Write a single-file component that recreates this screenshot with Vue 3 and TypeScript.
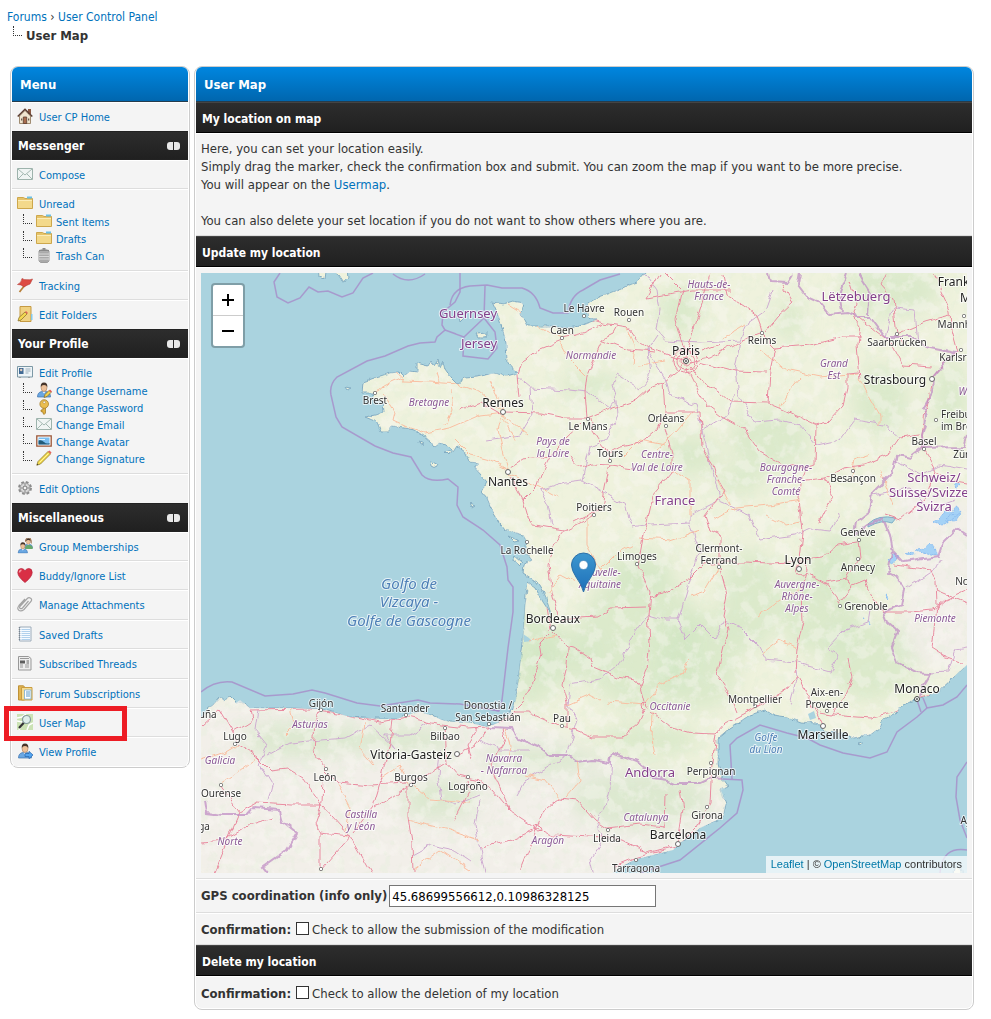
<script setup lang="ts">
import { ref } from 'vue'

interface SubItem { label: string; icon: string }
interface MenuItem { label: string; icon: string; children?: SubItem[]; tall?: boolean; marked?: boolean }
interface MenuSection { title?: string; items: MenuItem[] }

const sections: MenuSection[] = [
  { items: [{ label: 'User CP Home', icon: 'home' }] },
  {
    title: 'Messenger',
    items: [
      { label: 'Compose', icon: 'mail' },
      {
        label: 'Unread',
        icon: 'folder',
        children: [
          { label: 'Sent Items', icon: 'folder' },
          { label: 'Drafts', icon: 'folder' },
          { label: 'Trash Can', icon: 'trash' },
        ],
      },
      { label: 'Tracking', icon: 'flag' },
      { label: 'Edit Folders', icon: 'editfolder' },
    ],
  },
  {
    title: 'Your Profile',
    items: [
      {
        label: 'Edit Profile',
        icon: 'card',
        children: [
          { label: 'Change Username', icon: 'useredit' },
          { label: 'Change Password', icon: 'key' },
          { label: 'Change Email', icon: 'mail' },
          { label: 'Change Avatar', icon: 'picture' },
          { label: 'Change Signature', icon: 'pencil' },
        ],
      },
      { label: 'Edit Options', icon: 'gear' },
    ],
  },
  {
    title: 'Miscellaneous',
    items: [
      { label: 'Group Memberships', icon: 'group' },
      { label: 'Buddy/Ignore List', icon: 'heart' },
      { label: 'Manage Attachments', icon: 'clip', tall: true },
      { label: 'Saved Drafts', icon: 'notebook' },
      { label: 'Subscribed Threads', icon: 'news', tall: true },
      { label: 'Forum Subscriptions', icon: 'forum' },
      { label: 'User Map', icon: 'mapsearch', marked: true },
      { label: 'View Profile', icon: 'userview' },
    ],
  },
]

const coords = ref('45.68699556612,0.10986328125')
const confirmUpdate = ref(false)
const confirmDelete = ref(false)

const land =
  'M655 262L637 282 617 290 597 298 585 307 588 317 597 320 583 325 570 328 550 326 527 326 524 320 521 313 523 303 513 301 503 304 492 302 498 315 502 328 506 342 507 362 517 373 507 376 493 373 477 377 465 378 457 384 450 377 445 370 443 362 440 368 438 360 434 366 431 361 428 366 417 363 417 372 410 371 403 377 398 372 390 373 377 377 363 382 362 393 373 393 375 400 383 402 384 412 376 415 365 417 377 422 381 432 388 432 392 426 403 428 415 430 423 435 430 441 435 447 440 443 450 447 453 452 457 446 465 452 470 462 478 463 475 468 487 482 482 492 487 498 493 512 500 523 497 520 505 530 523 535 527 542 525 552 532 560 524 565 523 573 537 582 545 595 551 614 543 602 535 587 528 582 526 595 524 618 523 642 520 665 517 692 513 710 500 722 488 727 470 723 450 722 442 720 430 715 420 712 407 715 397 719 377 719 350 717 333 712 320 709 290 708 250 708 240 700 236 703 229 696 225 701 220 697 213 705 207 710 201 718 188 722 188 885 600 885 613 873 622 866 637 859 673 850 680 843 700 828 723 817 726 803 721 790 728 787 723 780 718 763 718 738 730 728 750 715 765 710 773 715 787 717 800 722 817 723 825 732 843 733 853 738 870 735 880 728 883 720 897 712 903 705 917 699 937 693 953 678 967 665 980 655 980 262Z'

const motorways: string[] = [
  '686,361 663,353 648,348 637,340 628,327 603,323 587,318', '562,338 583,333 603,324', '562,340 537,350 522,362 518,375 520,397',
  '505,412 540,413 565,418 587,418 613,408 637,400 650,388 665,382 680,370 686,361', '591,418 593,432 600,443 608,453 610,461',
  '610,453 620,447 640,443 658,428 665,412 663,382', '587,418 585,392 587,375 600,345 603,338 613,333 617,326',
  '510,468 523,460 550,457 567,438 583,423', '570,455 580,468 593,464 610,465 633,468', '610,465 605,488 602,508 573,522',
  '602,508 593,515 565,530 553,545 548,565 552,592 558,615', '510,477 523,500 528,518 533,525 565,530', '523,500 538,485 542,473 550,457',
  '553,632 567,647 575,648 590,658 593,667 617,677 635,680 640,687 645,705', '650,712 670,727 692,733 715,734 725,723 755,707 788,688 797,675',
  '795,672 797,648 803,622 802,588 807,572', '798,567 802,532 800,515 798,498 807,467 815,465 816,425 780,408 768,403 730,402 720,393 700,380 690,366',
  '816,425 827,422 843,405 847,388 847,373 858,372', '860,378 857,345 860,325 853,315 857,302 850,280', '775,348 810,345 843,337 860,337',
  '690,362 710,358 743,340 762,333 757,315 743,305 727,295 723,275', '765,332 777,317 793,302 783,285', '762,335 775,348 770,372 768,403',
  '860,318 877,332 892,343 903,365 932,367', '932,380 925,412 922,435 923,449', '932,378 945,362 957,352 951,330 950,310 938,285 934,273',
  '807,480 825,478 843,468 863,465 888,455 900,438 920,435', '825,478 833,495 820,522', '687,368 697,388 707,405 720,415 743,428 760,452 783,465 807,467',
  '665,428 672,455 672,472 653,495 647,522 643,538 638,565 650,592 648,615 650,642 647,668 640,687', '650,598 663,595 690,578 703,565 720,563',
  '560,620 580,618 597,617 610,608 647,607', '722,562 745,562 770,563 793,562', '665,412 700,412 702,448 713,465 717,478 724,490', '720,562 720,535 710,530 705,515 724,490',
  '720,568 727,595 723,615 728,628 717,675 730,695 737,712', '807,573 825,583 837,598 840,605', '800,560 822,558 837,545 857,542',
  '858,542 860,558 847,578 853,587 840,602', '825,582 847,578', '853,585 865,580 870,595 883,612 910,612 933,610', '936,580 937,605 932,648 943,655 963,662',
  '937,590 967,603', '933,610 945,600 967,590', '936,580 930,570 895,565', '820,713 832,715 870,718 897,712 917,699 937,693', '797,675 805,692 817,712 823,725', '832,715 843,698 852,678 848,658',
  '645,708 637,725 622,737 593,737 577,730 560,727 528,712 513,712 498,723', '550,632 540,642 542,655 533,682 523,702 513,712', '567,728 567,702 562,685 567,665 568,648',
  '716,735 712,763 710,803 697,827 677,847 637,857 613,867', '670,847 647,853 623,840 590,837 552,835 537,828 510,810 493,790 480,780 457,775 447,763 445,728',
  '537,827 543,812 560,798 577,800 595,820 607,828', '447,762 430,773 410,785 375,808', '408,787 408,817 412,843 413,872', '407,783 370,785 337,782 325,770',
  '327,770 313,750 315,723 320,710', '323,777 322,803 315,823 320,833 320,868', '323,805 290,805 257,803 240,812 220,785', '237,745 257,757 270,770 287,768 303,778 323,807',
  '323,807 350,837 370,872', '320,833 350,836', '350,837 320,871', '353,833 373,807 382,777 390,743 393,720', '250,710 313,709 337,713 380,722 407,717 440,725 467,728 488,727',
  '203,725 220,710 233,732 237,745', '233,732 252,720 250,710', '201,842 225,840 250,825 272,818', '240,812 228,840 215,872', '488,727 475,745 457,755', '537,828 515,838 480,848', '510,810 490,765 505,740 503,728',
  '664,828 665,795', '680,790 683,810 678,842', '607,828 640,824 665,827', '503,415 480,402 460,410', '686,355 695,325 703,300 710,273', '686,356 675,320 682,290 665,273', '647,298 660,273', '647,298 690,290 730,290',
  '700,363 735,372 765,373', '702,352 720,345', '603,340 628,350 655,352', '545,595 551,630', '478,728 468,745 472,760', '455,820 470,790 468,780', '520,870 530,845 537,828',
  '893,300 897,334 925,322 950,315', '893,300 880,285 886,273', '897,334 905,345', '923,449 935,470 950,480 967,483', '935,470 925,500 900,520 885,515',
]

const secondary: string[] = [
  '375,392 385,386 403,378 403,381 430,382 457,384 480,392 503,411', '383,393 395,412 393,420 410,428 425,433 450,428 480,415 503,412', '503,412 498,430 508,470', '503,415 528,435', '503,415 515,440',
  '403,378 397,373', '440,382 437,372', '490,382 497,395 503,410', '508,470 490,460 470,455 455,440', '508,474 540,487 558,497', '560,342 570,360 585,375', '562,338 540,327 520,312 507,304',
  '450,390 452,410 445,425', '627,328 635,345 633,365', '665,361 640,365', '760,350 785,370 820,377 858,373', '860,378 870,398 880,415 880,425', '645,705 660,685 680,675 690,660', '645,705 620,703 607,702',
  '548,592 560,575 575,583', '555,635 530,642', '718,568 705,590 690,595', '765,515 785,525 800,522', '715,520 735,508 770,505 800,500', '640,538 670,540 700,530', '587,518 587,545 600,570',
  '802,588 780,600 757,617', '653,712 652,740 655,755', '410,783 430,800 470,803', '345,837 350,808 337,783', '408,820 450,830 480,840', '382,777 400,765 408,785', '413,870 440,850 470,870', '201,760 225,752 237,745',
  '220,785 240,770 257,757', '505,728 510,745 508,760', '577,760 580,780 565,797', '560,798 545,780 525,775', '850,480 855,460 870,455', '880,470 893,505', '780,408 790,390 800,378', '723,338 745,325', '665,445 640,440 625,455', '692,412 670,438 655,450',
  '672,470 690,480 690,515', '633,545 615,555 595,575', '567,705 590,695 600,700', '717,480 730,505', '797,648 780,640 760,655', '365,722 360,750 373,765', '290,708 295,725 285,735',
]

const regions: string[] = [
  'M645 273L657 290 660 310 657 330 665 340 700 342 740 340 748 322 765 310 772 290', 'M657 335L647 350 650 375 640 390 618 375 612 385 617 400 610 408 587 392 570 390 530 388 518 378',
  'M530 388L532 415 520 435 485 440', 'M617 400L618 415 605 440 590 447 582 480 565 482 540 490 548 505 552 525', 'M582 480L600 490 625 505 632 525', 'M647 350L665 378 670 395 695 405 702 430 727 415 735 393',
  'M740 340L735 370 738 395 755 422 780 420 800 425 817 445 840 440 855 420 885 425 900 438', 'M702 430L712 470 720 500 690 515 690 523 650 525 632 528', 'M690 523L700 550 690 580 678 620 685 640 700 625 715 640 725 620 740 628 757 645 765 660 795 663 797 675 790 705',
  'M715 500L750 515 760 540 795 535 810 528 830 530 840 515', 'M648 615L630 640 618 665 600 680 570 685 568 705 577 720 567 752', 'M797 663L830 672 838 655 828 648 845 630 868 622 870 610', 'M648 615L665 620 678 620',
  'M258 710L255 730 267 745 260 765 272 785 268 800', 'M268 755L290 743 320 740 345 738 360 730 370 725', 'M370 725L395 748 385 735 410 735 430 722', 'M440 750L438 775 442 800 455 805 480 795', 'M480 800L475 825 480 850 485 873', 'M567 755L550 765 525 780 517 795',
  'M612 755L610 790 605 808 597 820 603 840 590 860 593 873', 'M412 855L430 845 455 850 470 860', 'M480 740L500 750 530 750', 'M930 673L948 672 955 650 967 648', 'M905 590L935 570 940 560', 'M885 337L893 308 915 310 918 345', 'M895 460L920 475 940 465 967 470', 'M873 495L910 488 930 510 955 500',
]

const borders: string[] = [
  'M768 273L770 282 788 283 793 275', 'M800 273L798 285 807 297 820 303 830 315 847 313 857 317 870 317 885 337 910 337 930 347 955 352 943 365 933 377 932 392 923 408 927 418 922 435 923 448 910 458 898 455 893 472 873 492 870 512 857 522 855 535 868 525 883 518 890 535 893 552 903 562 938 557 943 542 957 528 967 535',
  'M847 273L840 292 843 312', 'M858 273L870 292 868 315', 'M923 448L963 447 967 435', 'M892 552L888 572 897 577 905 590 902 605 883 612 887 622 898 632 892 648 897 662 917 672 930 673 923 685 920 697',
  'M488 727L513 728 517 738 540 748 550 755 567 755 577 762 593 760 610 763 612 753 637 762 650 772 653 778 667 780 673 783 700 783 710 778 723 779', 'M205 800L207 813 223 815 247 815 253 808 280 810 283 822 297 833 287 850 263 867 268 873',
]

const maritime: string[] = [
  'M280 273L274 282 277 297 288 303 300 298 309 287 318 292 328 291 342 297 353 293 363 278 373 273', 'M393 274Q408 286 425 274',
  'M460 273L460 292 455 302 443 312 442 325 445 330 437 337 435 342 420 343 408 346 385 356 367 361 337 377Q329 385 331 395L336 417 342 427 375 446 393 453 411 457 422 475Q430 483 448 479L458 487 457 505 463 517 483 530 500 545 507 567 508 580 513 587 513 612 508 648 502 700 499 711 483 708',
  'M201 692Q215 680 232 682L265 696 293 694 312 690 325 693 357 703 380 706 418 700 430 703 460 704 499 711', 'M450 305Q452 288 470 286L487 285 502 288 522 288Q536 292 540 308L553 313 568 313Q570 296 583 290L600 280 620 274',
  'M485 286L484 318 495 332 497 348 488 359 463 356 464 337 445 330M484 318L464 337', 'M732 779L730 745 737 738 760 725 787 733 807 738 820 745 843 753 870 758 887 752 897 732 917 717 927 708 943 705 957 697 967 685',
  'M917 700L921 712M923 698L927 708', 'M723 779L742 780 743 790 737 813 720 828 680 860 640 873', 'M967 762L957 777 956 797 960 820 967 838', 'M940 873Q942 846 967 850',
]

const islands: string[] = [
  'M318 265L327 265 325 279 319 277Z', 'M333 265L347 265 348 279 342 282 338 276Z', 'M477 334L487 333 486 338 479 338Z', 'M459 316L464 318 460 322Z', 'M345 387L351 388 347 390Z', 'M431 461L438 465 436 468 432 466Z',
  'M419 442L424 444 420 445Z', 'M445 452L452 450 448 455Z', 'M508 536L520 541 514 542Z', 'M514 555L522 562 519 565 513 560Z', 'M470 504L475 506 472 508Z', 'M858 743L863 742 861 745Z', 'M955 868L960 866 965 880 953 880Z',
]

const woods = [
  [530, 658, 28, 50], [560, 655, 35, 30], [640, 640, 60, 70], [700, 660, 40, 50], [690, 455, 30, 20], [880, 400, 28, 34], [950, 400, 18, 40], [820, 610, 40, 45], [750, 600, 30, 50], [870, 660, 45, 40],
  [850, 560, 40, 30], [770, 440, 40, 30], [890, 290, 50, 26], [640, 800, 70, 28], [540, 760, 60, 14], [300, 740, 60, 18], [400, 740, 60, 14], [440, 800, 40, 20], [680, 310, 22, 24], [590, 385, 30, 12], [790, 320, 14, 20], [740, 480, 24, 14], [640, 570, 34, 20], [650, 740, 50, 16],
]

type Label = [text: string, x: number, y: number, kind: string]
const labels: Label[] = [
  ['Guernsey', 468, 318, 'country'], ['Jersey', 479, 348, 'country'], ['Lëtzebuerg', 856, 301, 'country'], ['France', 675, 505, 'country'], ['Andorra', 650, 777, 'country'],
  ['Schweiz/', 934, 482, 'country'], ['Suisse/Svizzera', 935, 497, 'country'], ['Svizra', 934, 511, 'country'],
  ['Le Havre', 584, 312, 'town'], ['Rouen', 629, 316, 'town'], ['Caen', 562, 334, 'town'], ['Brest', 375, 404, 'town'], ['Le Mans', 588, 430, 'town'], ['Orléans', 666, 422, 'town'], ['Tours', 610, 457, 'town'],
  ['Poitiers', 594, 511, 'town'], ['Reims', 762, 344, 'town'], ['Saarbrücken', 897, 346, 'town'], ['Mannheim', 963, 328, 'town'], ['Karlsruhe', 962, 361, 'town'], ['Freiburg', 961, 418, 'town'], ['im Breisgau', 969, 430, 'town'],
  ['Basel', 924, 445, 'town'], ['Zürich', 968, 458, 'town'], ['Besançon', 853, 482, 'town'], ['La Rochelle', 527, 554, 'town'], ['Limoges', 637, 560, 'town'], ['Clermont-', 719, 552, 'town'], ['Ferrand', 719, 564, 'town'],
  ['Genève', 858, 536, 'town'], ['Annecy', 858, 571, 'town'], ['Grenoble', 866, 610, 'town'], ['Novara', 972, 585, 'town'], ['Aix-en-', 827, 696, 'town'], ['Provence', 827, 708, 'town'], ['Montpellier', 755, 703, 'town'],
  ['Pau', 562, 722, 'town'], ['Donostia /', 488, 709, 'town'], ['San Sebastián', 488, 721, 'town'], ['Perpignan', 711, 775, 'town'], ['Girona', 707, 819, 'town'], ['Lleida', 607, 842, 'town'], ['Tarragona', 636, 872, 'town'],
  ['Santander', 405, 712, 'town'], ['Bilbao', 445, 740, 'town'], ['Gijón', 321, 707, 'town'], ['Lugo', 235, 740, 'town'], ['Ourense', 221, 797, 'town'], ['León', 325, 781, 'town'], ['Burgos', 411, 781, 'town'], ['Logroño', 468, 790, 'town'],
  ['A Coruña', 195, 718, 'town'], ['Braga', 196, 830, 'town'], ['Ajaccio', 977, 824, 'town'],
  ['Paris', 686, 355, 'city'], ['Rennes', 503, 407, 'city'], ['Nantes', 508, 486, 'city'], ['Strasbourg', 895, 384, 'city'], ['Lyon', 798, 564, 'city'], ['Bordeaux', 553, 623, 'city'], ['Marseille', 823, 739, 'city'],
  ['Monaco', 917, 693, 'city'], ['Barcelona', 678, 839, 'city'], ['Vitoria-Gasteiz', 411, 759, 'city'], ['Frankfurt', 964, 286, 'city'], ['Main', 974, 302, 'city'],
  ['Hauts-de-', 709, 288, 'region'], ['France', 709, 300, 'region'], ['Normandie', 591, 359, 'region'], ['Bretagne', 429, 406, 'region'], ['Pays de', 553, 445, 'region'], ['la Loire', 553, 457, 'region'],
  ['Centre-', 657, 458, 'region'], ['Val de Loire', 657, 471, 'region'], ['Grand', 834, 367, 'region'], ['Est', 834, 379, 'region'], ['Bourgogne-', 786, 471, 'region'], ['Franche-', 786, 483, 'region'], ['Comté', 786, 495, 'region'],
  ['Nouvelle-', 600, 576, 'region'], ['Aquitaine', 600, 588, 'region'], ['Auvergne-', 797, 588, 'region'], ['Rhône-', 797, 600, 'region'], ['Alpes', 797, 612, 'region'], ['Piemonte', 935, 622, 'region'], ['Occitanie', 670, 710, 'region'],
  ['Asturias', 310, 728, 'region'], ['Galicia', 220, 764, 'region'], ['Norte', 230, 845, 'region'], ['Castilla', 361, 818, 'region'], ['y León', 361, 830, 'region'], ['Navarra', 504, 762, 'region'], ['- Nafarroa', 504, 774, 'region'],
  ['Aragón', 548, 844, 'region'], ['Catalunya', 646, 821, 'region'], ['Württemberg', 988, 395, 'region'],
  ['Golfo de', 409, 589, 'sea'], ['Vizcaya -', 409, 607, 'sea'], ['Golfe de Gascogne', 409, 626, 'sea'], ['Golfe', 766, 741, 'gulf'], ['du Lion', 766, 753, 'gulf'],
]

const townDots = [
  [584, 316], [629, 320], [562, 338], [375, 393], [588, 419], [666, 426], [610, 461], [594, 515], [762, 333], [897, 334], [964, 316], [961, 350], [936, 420], [924, 449], [853, 471], [527, 542], [637, 564], [719, 567],
  [859, 540], [858, 559], [840, 606], [827, 711], [755, 706], [562, 726], [489, 724], [711, 763], [707, 807], [608, 830], [636, 860], [406, 715], [445, 728], [321, 710], [235, 744], [221, 785], [326, 769], [411, 785], [468, 777], [321, 869],
]
const cityDots = [[503, 412], [508, 472], [932, 379], [799, 569], [553, 628], [823, 726], [678, 844], [457, 754]]
const capitals = [[686, 361], [917, 699]]
</script>

<template>
  <svg class="defs" aria-hidden="true">
    <symbol id="i-home" viewBox="0 0 16 16"><path d="M11 1h3v5h-3z" fill="#8b5a44" /><path d="M2.500 8L8 2.500 13.500 8v7.500h-11z" fill="#efe5cf" stroke="#8c7355" stroke-width=".8" /><path d="M.7 8.500L8 1.200l7.300 7.300" fill="none" stroke="#5b3d31" stroke-width="1.500" /><path d="M6.300 15.500V9h3.400v6.500z" fill="#a86d4e" stroke="#5b3d31" stroke-width=".8" /><path d="M4 10.500h1.300v2H4zM11 10.500h1.300v2H11z" fill="#6b5a4c" /></symbol>
    <symbol id="i-mail" viewBox="0 0 16 16"><path d="M.5 2.500h15v11H.5z" fill="#f0f5f4" stroke="#9db3ac" /><path d="M1 3l7 6 7-6M1 13l5-5M15 13l-5-5" fill="none" stroke="#a3b8b1" /></symbol>
    <symbol id="i-folder" viewBox="0 0 16 16"><path d="M.5 2.500h6l1.500 1h7.500v10H.5z" fill="#e6c368" stroke="#cda74c" /><path d="M10 1.500h5v2h-5z" fill="#6cc1e6" /><path d="M1 5h14v8H1z" fill="#f3d98b" /><path d="M1 5.500h14" stroke="#fbecb8" /></symbol>
    <symbol id="i-trash" viewBox="0 0 16 16"><path d="M3 4h10v10l-1.500 1.500h-7L3 14z" fill="#c9c9c9" stroke="#8c8c8c" stroke-width=".8" /><path d="M5 5v10M7 5v10M9 5v10M11 5v10" stroke="#7c7c7c" stroke-width=".8" /><path d="M3 7h10M3 9.500h10M3 12h10" stroke="#ededed" stroke-width=".7" /><path d="M3 3.500Q8 1.500 13 3.500zM6.500 1.500h3" fill="#ddd" stroke="#888" /></symbol>
    <symbol id="i-flag" viewBox="0 0 16 16"><path d="M2.500 15L9.500 6" stroke="#b87f38" stroke-width="1.700" /><path d="M5 1.500q2 1.500 5 1.200 3 .5 5.500-.7L13 7q-3 1-6 3Q4 7 .5 7.500q4-1.500 4.500-6z" fill="#dd4b42" stroke="#b53831" stroke-width=".6" /></symbol>
    <symbol id="i-editfolder" viewBox="0 0 16 16"><path d="M3 .5h11v15H3z" fill="#f0d281" stroke="#c59a43" /><path d="M14 8h1.500v6H14z" fill="#84c9ed" /><path d="M1 15l1-3.500L8 6l2 2-6 6z" fill="#f2d650" stroke="#836a26" stroke-width=".7" /><path d="M8 6l2 2 1-1-2-2z" fill="#df6358" /></symbol>
    <symbol id="i-card" viewBox="0 0 16 16"><path d="M.5 2.500h15v10.500H.5z" fill="#eef4f7" stroke="#7c98a5" /><path d="M2 4h4.500v6H2z" fill="#416a94" /><circle cx="4.200" cy="6" r="1.200" fill="#e6d0be" /><path d="M8.500 5h5M8.500 7h5M8.500 9h3" stroke="#9cb0bd" /><path d="M3 13v1M12 13v1" stroke="#777" /></symbol>
    <symbol id="i-user" viewBox="0 0 16 16"><path d="M1.500 15q0-5 4.500-5.500h4q4.500.5 4.500 5.500z" fill="#6aa7e2" stroke="#3d72ae" stroke-width=".7" /><path d="M6.500 9.500L8 11.500l1.500-2z" fill="#fff" /><ellipse cx="8" cy="5.500" rx="3" ry="4" fill="#edc19a" stroke="#9b6e4a" stroke-width=".5" /><path d="M4.800 5Q4.300.5 8 .5t3.300 4.500Q10.500 3 8 3T4.800 5z" fill="#46352b" /></symbol>
    <symbol id="i-useredit" viewBox="0 0 16 16"><use href="#i-user" /><path d="M8 15.500l1-3 4-4 2 2-4 4z" fill="#f4d250" stroke="#7b662d" stroke-width=".7" /><path d="M13 8.500l2 2 1-1-2-2z" fill="#e0524a" /></symbol>
    <symbol id="i-userview" viewBox="0 0 16 16"><use href="#i-user" /><path d="M8 10.500h4V8.300l4 3.700-4 3.700v-2.200H8z" fill="#55a5f0" stroke="#2766ac" stroke-width=".7" /></symbol>
    <symbol id="i-key" viewBox="0 0 16 16"><path d="M7 8h2.500v6L8.200 15.500 7 14.500v-1.300l-2-.7V11l2-.3z" fill="#e2b343" stroke="#99711f" stroke-width=".7" /><circle cx="8.200" cy="5" r="4.300" fill="#eabd4e" stroke="#a77f2d" stroke-width=".8" /><circle cx="8.200" cy="3.300" r="1.200" fill="#fff" stroke="#99711f" stroke-width=".5" /></symbol>
    <symbol id="i-picture" viewBox="0 0 16 16"><path d="M.8 2.800h14.400v10.400H.8z" fill="#fff" stroke="#9a5434" stroke-width="1.300" /><path d="M2.500 4.500h11v7h-11z" fill="#79bef0" /><path d="M2.500 7.500q3-1 5.500 1.500t5.500 1v1.500h-11z" fill="#215b78" /><path d="M3 6.500h6" stroke="#e6f4fd" /></symbol>
    <symbol id="i-pencil" viewBox="0 0 16 16"><path d="M.8 15.200L2 11.500 12 1.500l2.500 2.500-10 10z" fill="#f3d948" stroke="#8c7a31" stroke-width=".8" /><path d="M3.500 12.500l9-9" stroke="#fff3a3" /><path d="M12 1.500L13.500.5 15.500 2.500l-1 1.500z" fill="#e5655c" /><path d="M.8 15.200l.5-1.500 1 1z" fill="#333" /></symbol>
    <symbol id="i-gear" viewBox="0 0 16 16"><circle cx="8" cy="8" r="5.700" fill="#c8c8c8" stroke="#8b8b8b" stroke-width="2.500" stroke-dasharray="2.600 1.900" /><circle cx="8" cy="8" r="4.900" fill="#d8d8d8" stroke="#969696" stroke-width=".7" /><circle cx="8" cy="8" r="2" fill="#f4f4f4" stroke="#777" /><path d="M8 3.500v2M8 10.500v2M3.500 8h2M10.500 8h2" stroke="#888" /></symbol>
    <symbol id="i-group" viewBox="0 0 16 16"><g transform="translate(6 0) scale(.66)"><use href="#i-user" width="16" height="16" /><path d="M4.500 6Q4 0 8 0t3.500 7L13 9V4Q12-1 8-1T3 5z" fill="#8b572c" /></g><path d="M8 11q0-4 3-4h2q3 .5 2.700 4z" fill="#66a86b" /><g transform="translate(0 4) scale(.73)"><use href="#i-user" width="16" height="16" /></g></symbol>
    <symbol id="i-heart" viewBox="0 0 16 16"><path d="M8 15.500Q1 10 .8 5.500.8 1.500 4.300 1.500 7 1.500 8 4q1-2.500 3.700-2.500 3.500 0 3.500 4Q15 10 8 15.500z" fill="#d92f45" stroke="#b51e36" stroke-width=".7" /><path d="M2.500 5.500q0-2 2-2.300" fill="none" stroke="#f69aa5" stroke-width="1.500" /></symbol>
    <symbol id="i-clip" viewBox="0 0 16 16"><path d="M11.500 5L5.500 12q-1.500 1.300-2.500.3T3.300 10l7-7.500q1.500-1.500 3.300-.3T14 5.500l-7 8q-3 2.500-5.200.8T2 9.500L8 3" fill="none" stroke="#a4a4a4" stroke-width="1.200" /></symbol>
    <symbol id="i-notebook" viewBox="0 0 16 16"><path d="M2.500 1h11.500v14H2.500z" fill="#f5faff" stroke="#9cabb9" /><path d="M4.500 3.500H13M4.500 5.500H13M4.500 7.500H13M4.500 9.500H13M4.500 11.500H13M4.500 13.500H13" stroke="#a8cbea" stroke-width=".9" /><path d="M2.500 1v14" stroke="#7c858e" stroke-width="1.500" stroke-dasharray="1 1" /></symbol>
    <symbol id="i-news" viewBox="0 0 16 16"><path d="M1.500 1.500h10l2.500 2v11.500H1.500z" fill="#eee" stroke="#989898" /><path d="M3 3.500h9M3 10h3M8 10h4M3 12h3M8 12h4" stroke="#999" /><path d="M3 5.500h5v3H3z" fill="#5e5e5e" /><path d="M9.500 6H12M9.500 8H12" stroke="#666" /></symbol>
    <symbol id="i-forum" viewBox="0 0 16 16"><path d="M1.500.8h5l1 1.200v13H1.500z" fill="#e0b553" stroke="#be9137" /><path d="M4.500 2.500h10.500v12.500H4.500z" fill="#f5db90" stroke="#c99c3f" /><path d="M7.500 5h6.500v9H7.500z" fill="#fff" stroke="#68a3d1" stroke-width=".7" /><path d="M9 7h4M9 9h4M9 11h4" stroke="#5b9ac8" /></symbol>
    <symbol id="i-mapsearch" viewBox="0 0 16 16"><path d="M0 0h16v16H0z" fill="#cbe2b4" /><path d="M0 4l5-1L9 0M2 16L6 8 0 7M10 16l2-5 4-2" fill="none" stroke="#fff" stroke-width="1.500" /><path d="M2 14L7 8.500" stroke="#333" stroke-width="2.200" /><circle cx="9.500" cy="5.500" r="4" fill="#dfefeb" stroke="#859b9b" stroke-width="1.200" /></symbol>
  </svg>

  <nav class="breadcrumb">
    <div><a href="#">Forums</a> <span>›</span> <a href="#">User Control Panel</a></div>
    <div class="current"><i class="branch"></i><strong>User Map</strong></div>
  </nav>

  <div class="page">
    <aside class="panel menu">
      <h2 class="thead">Menu</h2>
      <section v-for="(section, s) in sections" :key="s">
        <h3 v-if="section.title" class="tcat">{{ section.title }}<button type="button" class="toggle" :aria-label="'Collapse ' + section.title"><i></i><i></i></button></h3>
        <ul class="rows">
          <li v-for="item in section.items" :key="item.label" :class="{ parent: item.children, tall: item.tall, marked: item.marked }">
            <a href="#" class="entry"><svg class="icon"><use :href="'#i-' + item.icon" /></svg>{{ item.label }}</a>
            <ul v-if="item.children" class="subs">
              <li v-for="sub in item.children" :key="sub.label">
                <i class="branch"></i><a href="#" class="entry"><svg class="icon"><use :href="'#i-' + sub.icon" /></svg>{{ sub.label }}</a>
              </li>
            </ul>
          </li>
        </ul>
      </section>
    </aside>

    <main class="panel content">
      <h1 class="thead">User Map</h1>
      <h2 class="tcat">My location on map</h2>
      <div class="cell intro">
        <p>Here, you can set your location easily.<br />Simply drag the marker, check the confirmation box and submit. You can zoom the map if you want to be more precise.<br />You will appear on the <a href="#">Usermap</a>.</p>
        <p>You can also delete your set location if you do not want to show others where you are.</p>
      </div>
      <h2 class="tcat">Update my location</h2>
      <div class="cell">
        <div class="map">
          <svg class="tiles" viewBox="201 273 766 600" preserveAspectRatio="xMidYMid slice" role="img" aria-label="Map of France">
            <defs>
              <clipPath id="landclip"><path :d="land" /></clipPath>
              <filter id="wiggle" filterUnits="userSpaceOnUse" x="180" y="253" width="810" height="640"><feTurbulence type="fractalNoise" baseFrequency=".09" numOctaves="2" seed="4" /><feDisplacementMap in="SourceGraphic" scale="7" xChannelSelector="R" yChannelSelector="G" /></filter>
              <filter id="coast" filterUnits="userSpaceOnUse" x="180" y="253" width="810" height="640"><feTurbulence type="fractalNoise" baseFrequency=".16" numOctaves="2" seed="9" /><feDisplacementMap in="SourceGraphic" scale="5" xChannelSelector="R" yChannelSelector="G" /></filter>
              <filter id="soft" filterUnits="userSpaceOnUse" x="180" y="253" width="810" height="640"><feGaussianBlur stdDeviation="9" /></filter>
              <filter id="forest" filterUnits="userSpaceOnUse" x="180" y="253" width="810" height="640"><feTurbulence type="fractalNoise" baseFrequency=".11" numOctaves="4" seed="12" /><feColorMatrix values="0 0 0 0 .74  0 0 0 0 .85  0 0 0 0 .67  5 0 0 0 -2.500" /></filter>
              <filter id="fields" filterUnits="userSpaceOnUse" x="180" y="253" width="810" height="640"><feTurbulence type="fractalNoise" baseFrequency=".07" numOctaves="4" seed="31" /><feColorMatrix values="0 0 0 0 .95  0 0 0 0 .93  0 0 0 0 .89  0 6 0 0 -2.900" /></filter>
              <linearGradient id="pin" x2="0" y2="1"><stop stop-color="#3d97cf" /><stop offset="1" stop-color="#1d6fb9" /></linearGradient>
            </defs>
            <rect x="201" y="273" width="766" height="600" fill="#aad3df" />
            <g filter="url(#coast)">
              <path :d="land" class="land" />
              <path v-for="(d, i) in islands" :key="i" :d="d" class="land" />
            </g>
            <g clip-path="url(#landclip)">
              <path d="M190 700H490L620 765 727 790V885H190z" fill="#f2efe9" filter="url(#soft)" />
              <path d="M895 480L975 500V665L930 672 895 650 905 590z" fill="#f2efe9" filter="url(#soft)" />
              <g filter="url(#soft)"><ellipse v-for="(w, i) in woods" :key="i" :cx="w[0]" :cy="w[1]" :rx="w[2]" :ry="w[3]" class="wood" /></g>
              <rect x="201" y="273" width="766" height="600" filter="url(#fields)" opacity=".4" />
              <rect x="201" y="273" width="766" height="600" filter="url(#forest)" opacity=".25" />
              <path d="M868 524q10-10 28-6l-4 5q-10-4-24 4z" fill="#aad3df" stroke="#7eaec8" />
              <path d="M523 634l6 4 3 3-8 1zM808 714l6-3 2 7-6 2z" fill="#aad3df" />
              <path d="M933 522l8-5 4-6 8 2 2-5 5 3-6 8-11 5zM905 554l8-3 3 4zM916 550l9-3 6-4 4 5 3 8-8-2zM888 560l5-6 6 2-5 8zM885 595l3 2-2 3zM863 616l2 3zM868 620l2 4zM955 480l5 4-3 6zM945 520l7-5 8-2-4 8z" fill="#a5d2f6" stroke="#8cbdf0" stroke-dasharray="2 1" filter="url(#wiggle)" />
            </g>
            <g clip-path="url(#landclip)">
              <g filter="url(#wiggle)" fill="none">
                <path v-for="(d, i) in regions" :key="'r' + i" :d="d" stroke="#cfacd1" />
                <polyline v-for="(p, i) in secondary" :key="'s' + i" :points="p" stroke="#f9bfa2" />
                <polyline v-for="(p, i) in motorways" :key="'m' + i" :points="p" stroke="#e98ba0" />
                <path v-for="(d, i) in borders" :key="'b' + i" :d="d" stroke="#c08fc4" stroke-width="2" opacity=".75" />
                <circle v-for="r in [5, 9, 12]" :key="r" cx="686" cy="361" :r="r" stroke="#e98ba0" />
                <circle cx="802" cy="569" r="6" stroke="#e98ba0" />
                <circle cx="538" cy="828" r="3" stroke="#e98ba0" />
                <circle cx="645" cy="706" r="3" stroke="#e98ba0" />
              </g>
            </g>
            <path v-for="(d, i) in maritime" :key="i" :d="d" class="maritime" />
            <g fill="#fff" stroke="#666"><rect v-for="(t, i) in townDots" :key="i" :x="t[0] - 1.5" :y="t[1] - 1.5" width="3" height="3" rx="1" /><circle v-for="(c, i) in cityDots" :key="i" :cx="c[0]" :cy="c[1]" r="2.500" /></g>
            <g stroke="#444"><circle v-for="(c, i) in capitals" :key="i" :cx="c[0]" :cy="c[1]" r="2.500" fill="#fff" /><circle v-for="(c, i) in capitals" :key="'c' + i" :cx="c[0]" :cy="c[1]" r=".5" /></g>
            <text v-for="(l, i) in labels" :key="i" :x="l[1]" :y="l[2]" :class="['label', l[3]]">{{ l[0] }}</text>
            <path d="M583.500 592Q582 585 576 577 571.500 570 571.500 565A12 12 0 0 1 595.500 565Q595.500 570 591 577 585 585 583.500 592z" fill="url(#pin)" stroke="#2c6fa8" /><circle cx="583.500" cy="565" r="4.500" fill="#fff" stroke="#2d74b0" stroke-width=".6" />
          </svg>
          <div class="zoom"><button type="button" aria-label="Zoom in"><svg viewBox="0 0 12 12"><path d="M0 6h12M6 0v12" /></svg></button><button type="button" aria-label="Zoom out"><svg viewBox="0 0 12 12"><path d="M0 6h12" /></svg></button></div>
          <div class="credit"><a href="#">Leaflet</a> | © <a href="#">OpenStreetMap</a> contributors</div>
        </div>
      </div>
      <div class="cell field gps"><label for="gps"><strong>GPS coordination (info only)</strong></label><input id="gps" v-model="coords" type="text" /></div>
      <div class="cell field"><strong>Confirmation:</strong><input id="upd" v-model="confirmUpdate" type="checkbox" /><label for="upd">Check to allow the submission of the modification</label></div>
      <h2 class="tcat">Delete my location</h2>
      <div class="cell field last"><strong>Confirmation:</strong><input id="del" v-model="confirmDelete" type="checkbox" /><label for="del">Check to allow the deletion of my location</label></div>
    </main>
  </div>
</template>

<style>
body {
  margin: 0;
  background: #fff;
  color: #333;
  font: 13px/18px Tahoma, "DejaVu Sans Condensed", "DejaVu Sans", sans-serif;
}
</style>

<style scoped>
a { color: #0072bc; text-decoration: none; }
h1, h2, h3, p, ul { margin: 0; padding: 0; font: inherit; list-style: none; }
.defs { position: absolute; width: 0; height: 0; }
.breadcrumb { padding: 8px 7px 0; height: 59px; box-sizing: border-box; font-size: 12px; }
.current { display: flex; align-items: center; gap: 4px; padding-left: 6px; font-size: 13px; line-height: 20px; }
.current .branch { align-self: flex-start; }
.branch { width: 8px; height: 9px; border-left: 1px dotted #333; border-bottom: 1px dotted #333; flex: none; }
.page { display: flex; align-items: flex-start; gap: 4px; padding: 7px 17px 10px 10px; }
.panel { border: 1px solid #ccc; border-radius: 8px; padding: 0 1px 1px; background: #fff; }
.menu { width: 176px; flex: none; font-size: 11px; }
.content { flex: 1; min-width: 0; }
.thead { box-sizing: border-box; height: 35px; padding: 0 8px; border-bottom: 1px solid #263c4c; border-radius: 6px 6px 0 0; background: linear-gradient(#0086df, #0066ae); color: #fff; font-size: 13px; font-weight: bold; line-height: 35px; }
.tcat { box-sizing: border-box; display: flex; align-items: center; justify-content: space-between; height: 31px; padding: 2px 6px 0; border-top: 1px solid #444; border-bottom: 1px solid #000; background: linear-gradient(#2d2d2d, #202020); color: #fff; font-size: 12px; font-weight: bold; }
.menu .tcat { height: 29px; padding: 0 8px 0 6px; border-color: #222; }
.toggle { display: flex; gap: 1px; padding: 0; border: 0; background: none; }
.toggle i { width: 6px; height: 8px; background: #e8e8e8; border-radius: 3px 0 0 3px; }
.toggle i + i { border-radius: 0 3px 3px 0; }
.rows { background: #f4f4f4; }
.rows > li { position: relative; box-sizing: border-box; min-height: 29px; padding: 7px 5px 3px; border-bottom: 1px solid #ddd; box-shadow: inset 0 1px #fff; }
.rows > li:last-child { border-bottom-color: #f4f4f4; }
.menu section:last-child .rows { border-radius: 0 0 6px 6px; }
.rows > .parent { padding-bottom: 5px; }
.rows > .tall { min-height: 30px; }
.rows > .marked { z-index: 1; }
.marked::after { content: ""; position: absolute; left: -8px; top: -2px; width: 113px; height: 25px; border: 5px solid #ed1c24; }
.entry { display: flex; align-items: center; gap: 6px; height: 18px; }
.icon { width: 16px; height: 16px; margin-bottom: 4px; flex: none; }
.subs li { display: flex; gap: 4px; height: 17px; padding-left: 6px; }
.subs .entry { height: 17px; gap: 4px; }
.cell { padding: 6px 5px 5px; border-bottom: 1px solid #ddd; background: #f4f4f4; box-shadow: inset 0 1px #fff; }
.intro p + p { margin-top: 18px; }
.intro { padding-top: 7px; }
.map { position: relative; height: 600px; overflow: hidden; }
.tiles { display: block; width: 100%; height: 100%; }
.land { fill: #eff2dd; stroke: #82acc3; stroke-width: 1; }
.wood { fill: #cfe4c0; opacity: .6; }
.maritime { fill: none; stroke: #a78fca; stroke-width: 1.500; opacity: .85; }
.label { font-family: "Noto Sans", sans-serif; font-size: 10px; fill: #333; text-anchor: middle; stroke: rgba(255, 255, 255, .7); stroke-width: 2px; stroke-linejoin: round; paint-order: stroke; }
.city { font-size: 12px; fill: #222; }
.country { font-size: 13px; fill: #84408b; }
.region { font-style: italic; fill: #8b5a96; }
.sea { font-size: 15px; font-style: italic; fill: #4d7fb6; }
.gulf { font-style: italic; fill: #4d7fb6; }
.zoom { position: absolute; top: 10px; left: 10px; border: 2px solid rgba(0, 0, 0, .25); border-radius: 4px; background: #fff; background-clip: padding-box; }
.zoom button { display: flex; align-items: center; justify-content: center; width: 30px; height: 30px; padding: 0; border: 0; background: none; }
.zoom button + button { height: 31px; border-top: 1px solid #ccc; }
.zoom svg { width: 12px; height: 12px; stroke: #000; stroke-width: 2; }
.credit { position: absolute; right: 0; bottom: 0; padding: 0 5px; background: rgba(255, 255, 255, .7); font: 11px/17px "Liberation Sans", Arial, sans-serif; }
.credit a { color: #0078a8; }
.field { display: flex; align-items: center; box-sizing: border-box; min-height: 32px; padding-top: 8px; }
.gps { min-height: 34px; padding-top: 6px; gap: 2px; }
.gps input { box-sizing: border-box; width: 267px; height: 22px; padding: 1px 2px; border: 1px solid #767676; background: #fff; color: #000; font: inherit; }
.field input[type="checkbox"] { appearance: none; width: 13px; height: 13px; margin: 0 3px 3px 5px; border: 1px solid #333; background: #fff; }
.field input[type="checkbox"]:checked { background: #0072bc; }
.last { border-bottom: 0; border-radius: 0 0 6px 6px; }
</style>
